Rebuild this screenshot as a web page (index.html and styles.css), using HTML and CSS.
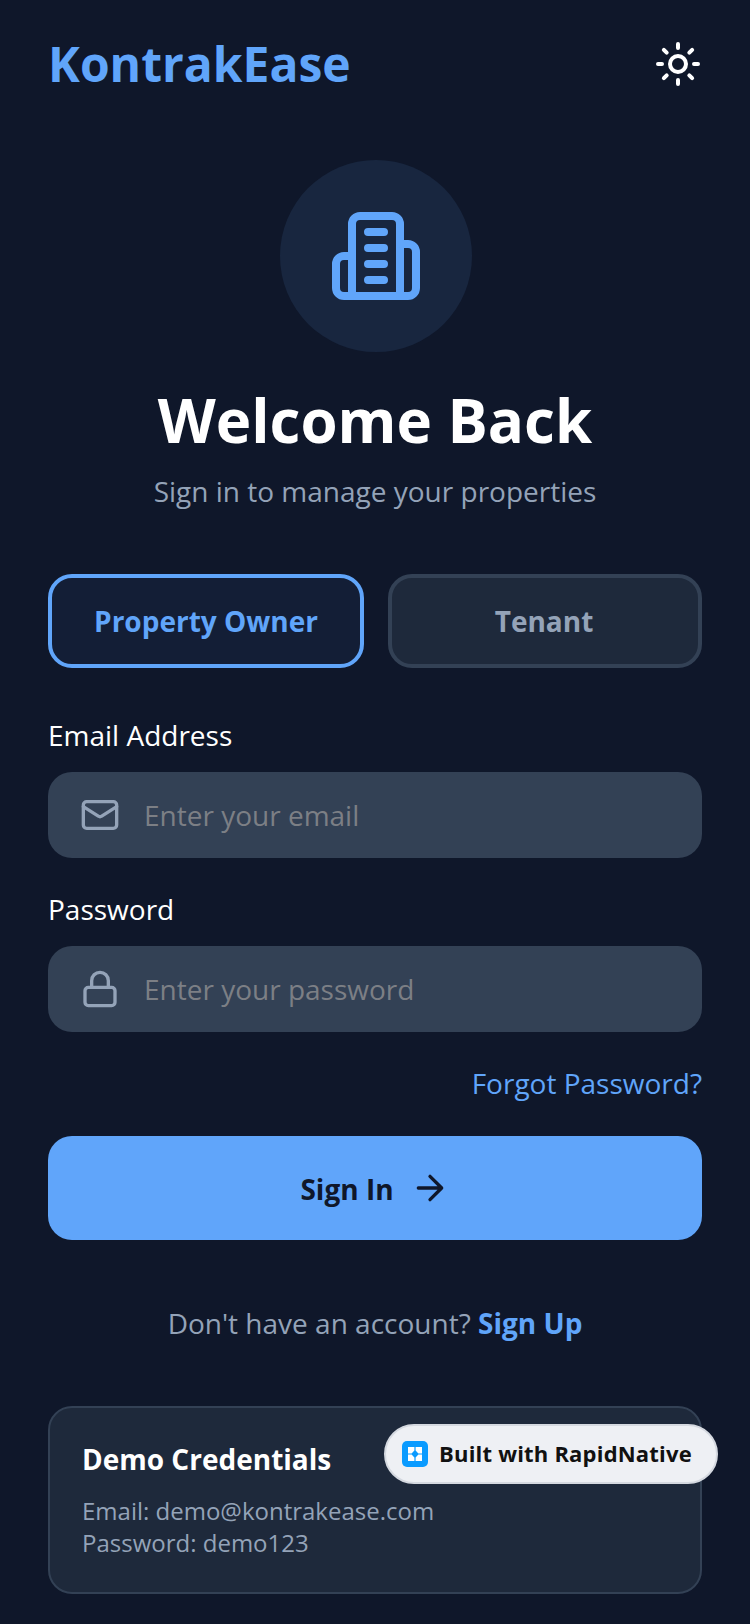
FILE: index.html
```html
<!DOCTYPE html>
<html lang="en">
<head>
<meta charset="utf-8">
<title>KontrakEase</title>
<link rel="stylesheet" href="styles.css">
</head>
<body>
<main class="screen">
  <header class="topbar">
    <span class="brand">KontrakEase</span>
    <svg class="sun" viewBox="0 0 24 24" fill="none" stroke="#fff" stroke-width="2" stroke-linecap="round"><circle cx="12" cy="12" r="4"/><path d="M12 2v2M12 20v2M4.93 4.93l1.41 1.41M17.66 17.66l1.41 1.41M2 12h2M20 12h2M6.34 17.66l-1.41 1.41M19.07 4.93l-1.41 1.41"/></svg>
  </header>
  <section class="hero">
    <div class="hero-circle">
      <svg class="building" viewBox="0 0 24 24" fill="none" stroke="#60a5fa" stroke-width="2" stroke-linecap="round" stroke-linejoin="round"><path d="M6 22V4a2 2 0 0 1 2-2h8a2 2 0 0 1 2 2v18Z"/><path d="M6 12H4a2 2 0 0 0-2 2v6a2 2 0 0 0 2 2h2"/><path d="M18 9h2a2 2 0 0 1 2 2v9a2 2 0 0 1-2 2h-2"/><path d="M10 6h4M10 10h4M10 14h4M10 18h4"/></svg>
    </div>
    <h1 class="title">Welcome Back</h1>
    <p class="subtitle">Sign in to manage your properties</p>
  </section>
  <div class="roles">
    <button class="role role-active">Property Owner</button>
    <button class="role role-idle">Tenant</button>
  </div>
  <label class="field-label field-label-first">Email Address</label>
  <div class="input">
    <svg class="input-icon" viewBox="0 0 24 24" fill="none" stroke="#94a3b8" stroke-width="2" stroke-linecap="round" stroke-linejoin="round"><rect x="2" y="4" width="20" height="16" rx="2"/><path d="m22 7-8.97 5.7a1.94 1.94 0 0 1-2.06 0L2 7"/></svg>
    <span class="placeholder">Enter your email</span>
  </div>
  <label class="field-label">Password</label>
  <div class="input">
    <svg class="input-icon" viewBox="0 0 24 24" fill="none" stroke="#94a3b8" stroke-width="2" stroke-linecap="round" stroke-linejoin="round"><rect x="3" y="11" width="18" height="11" rx="2"/><path d="M7 11V7a5 5 0 0 1 10 0v4"/></svg>
    <span class="placeholder">Enter your password</span>
  </div>
  <a class="forgot">Forgot Password?</a>
  <button class="submit"><span class="submit-text">Sign In</span>
    <svg class="arrow" viewBox="0 0 24 24" fill="none" stroke="#0f172a" stroke-width="2" stroke-linecap="round" stroke-linejoin="round"><path d="M5 12h14M12 5l7 7-7 7"/></svg>
  </button>
  <p class="signup">Don't have an account? <b class="signup-link">Sign Up</b></p>
  <section class="demo">
    <h2 class="demo-title">Demo Credentials</h2>
    <p class="demo-line">Email: demo@kontrakease.com</p>
    <p class="demo-line">Password: demo123</p>
  </section>
</main>
<div class="badge">
  <svg class="badge-logo" viewBox="0 0 26 26"><rect width="26" height="26" rx="5" fill="#0a9bff"/><path d="M6 6h6.4v3.6l-2.8 2.8H6zM13.6 6H20v6.4h-3.6l-2.8-2.8zM6 13.6h3.6l2.8 2.8V20H6zM16.4 13.6H20V20h-6.4v-3.6z" fill="#fff"/></svg>
  <span class="badge-text">Built with RapidNative</span>
</div>
</body>
</html>
```
FILE: styles.css
```css
* { box-sizing: border-box; margin: 0; padding: 0; }
html, body { height: 100%; }
body { background: #0f172a; font-family: "Open Sans", "Noto Sans", sans-serif; overflow: hidden; position: relative; }
.screen { padding: 0 48px; display: flex; flex-direction: column; }
.topbar { height: 127px; display: flex; align-items: center; justify-content: space-between; }
.brand { font-size: 48px; font-weight: 700; color: #60a5fa; line-height: 64px; padding-top: 1px; }
.sun { width: 48px; height: 48px; }
.hero { display: flex; flex-direction: column; align-items: center; padding-top: 33px; }
.hero-circle { width: 192px; height: 192px; margin-left: 2px; border-radius: 50%; background: #18263f; display: flex; align-items: center; justify-content: center; }
.building { width: 96px; height: 96px; }
.title { font-size: 60px; font-weight: 700; color: #fff; line-height: 80px; margin-top: 28px; }
.subtitle { font-size: 28px; color: #94a3b8; line-height: 40px; margin-top: 11px; }
.roles { display: flex; gap: 24px; margin-top: 63px; }
.role { flex: 1; height: 94px; border-radius: 24px; border: 4px solid #334155; background: #1e293b; color: #94a3b8; font: 700 28px "Open Sans", "Noto Sans", sans-serif; }
.role-idle { padding-right: 2px; }
.role-active { flex: none; width: 316px; border-color: #60a5fa; background: #131e36; color: #60a5fa; }
.field-label { font-size: 28px; color: #fff; line-height: 40px; margin-top: 31px; }
.field-label-first { margin-top: 47px; }
.input { height: 86px; margin-top: 17px; border-radius: 24px; background: #334155; display: flex; align-items: center; padding-left: 32px; gap: 24px; }
.input-icon { width: 40px; height: 40px; }
.placeholder { font-size: 28px; color: #7c7f85; }
.forgot { align-self: flex-end; font-size: 28px; color: #60a5fa; line-height: 40px; margin-top: 31px; }
.submit { height: 104px; margin-top: 33px; border: 0; border-radius: 24px; background: #60a5fa; display: flex; align-items: center; justify-content: center; gap: 16px; color: #0f172a; font: 700 28px "Open Sans", "Noto Sans", sans-serif; }
.submit-text { padding-top: 2px; }
.arrow { width: 40px; height: 40px; }
.signup { text-align: center; font-size: 28px; color: #94a3b8; line-height: 40px; margin-top: 63px; }
.signup-link { color: #60a5fa; font-weight: 700; }
.demo { margin-top: 63px; height: 188px; border: 2px solid #334155; border-radius: 24px; background: #1e293b; padding: 31px 32px; }
.demo-title { font-size: 28px; font-weight: 700; color: #fff; line-height: 40px; margin-bottom: 16px; }
.demo-line { font-size: 24px; color: #94a3b8; line-height: 32px; }
.badge { position: absolute; left: 384px; top: 1424px; width: 334px; height: 60px; border-radius: 30px; background: #eef0f4; border: 2px solid #d5d9e0; display: flex; align-items: center; padding-left: 16px; gap: 11px; }
.badge-logo { width: 26px; height: 26px; flex: none; }
.badge-text { font-size: 22px; font-weight: 700; letter-spacing: .2px; color: #111; white-space: nowrap; padding-bottom: 2px; }
```
